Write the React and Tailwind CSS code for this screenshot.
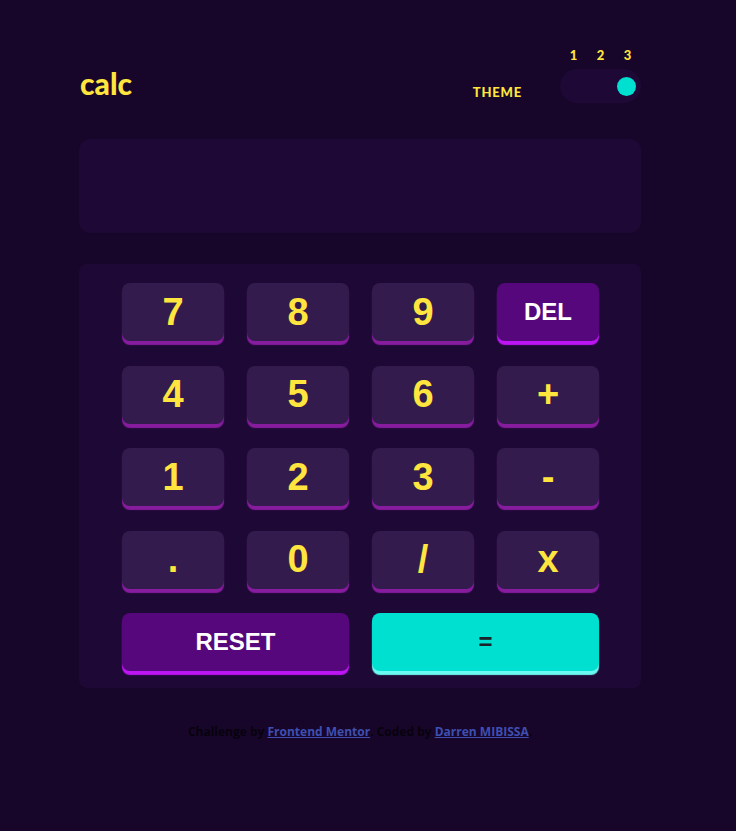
import React, { useState } from "react";

const keys = [
  { label: "7" },
  { label: "8" },
  { label: "9" },
  { label: "DEL", kind: "fn" },
  { label: "4" },
  { label: "5" },
  { label: "6" },
  { label: "+" },
  { label: "1" },
  { label: "2" },
  { label: "3" },
  { label: "-" },
  { label: "." },
  { label: "0" },
  { label: "/" },
  { label: "x" },
];

const keyBase =
  "h-[58px] rounded-[8px] flex items-center justify-center font-bold font-['Liberation_Sans',Arial,sans-serif]";

const Key = ({ label, kind }) => {
  if (kind === "fn") {
    return (
      <button
        className={`${keyBase} bg-[#56077c] text-white text-[24px] shadow-[0_4px_1px_#be15f4]`}
      >
        {label}
      </button>
    );
  }
  return (
    <button
      className={`${keyBase} bg-[#331c4d] text-[#ffe53d] text-[38px] shadow-[0_4px_1px_#881c9e]`}
    >
      {label}
    </button>
  );
};

export default function App() {
  const [theme, setTheme] = useState(3);

  return (
    <div className="min-h-screen bg-[#17062a] pr-[16px] font-['Lato','Open_Sans',sans-serif]">
      <div className="mx-auto w-[562px] pt-[47px]">
        {/* Header */}
        <div className="flex items-end justify-between">
          <h1 className="text-[#ffe53d] text-[30px] font-black leading-[30px] mb-[5px] ml-[1px] tracking-[0px]">
            calc
          </h1>
          <div className="flex items-end gap-[38px]">
            <span className="text-[#ffe53d] text-[13px] font-black leading-[16px] mb-[3px] tracking-[0.8px]">
              THEME
            </span>
            <div className="flex flex-col w-[81px]">
              <div className="grid grid-cols-3 text-center text-[#ffe53d] text-[13px] font-black leading-[16px] mb-[6px]">
                <span>1</span>
                <span>2</span>
                <span>3</span>
              </div>
              <div className="h-[34px] rounded-full bg-[#1e0936] flex items-center justify-end px-[5px]">
                <button
                  onClick={() => setTheme(theme === 3 ? 1 : theme + 1)}
                  className="w-[19px] h-[19px] rounded-full bg-[#00e0d1]"
                />
              </div>
            </div>
          </div>
        </div>

        {/* Screen */}
        <div className="mt-[36px] h-[94px] rounded-[12px] bg-[#1e0936]" />

        {/* Keypad */}
        <div className="mt-[31px] rounded-[8px] bg-[#1e0936] pl-[43px] pr-[42px] pt-[19px] pb-[17px]">
          <div className="grid grid-cols-4 gap-x-[23px] gap-y-[24.5px]">
            {keys.map((k) => (
              <Key key={k.label} {...k} />
            ))}
            <button
              className={`${keyBase} col-span-2 bg-[#56077c] text-white text-[24px] shadow-[0_4px_1px_#be15f4]`}
            >
              RESET
            </button>
            <button
              className={`${keyBase} col-span-2 bg-[#00e0d1] text-[#1a2327] text-[24px] shadow-[0_4px_1px_#6cf9f1]`}
            >
              =
            </button>
          </div>
        </div>

        {/* Footer */}
        <p className="mt-[36px] text-center text-[12px] font-bold text-[#07020d] leading-[16px] font-['Open_Sans',sans-serif]">
          Challenge by{" "}
          <a href="#" className="text-[#3e4fb0] underline">
            Frontend Mentor
          </a>
          . Coded by{" "}
          <a href="#" className="text-[#3e4fb0] underline">
            Darren MIBISSA
          </a>
          .
        </p>
      </div>
    </div>
  );
}
